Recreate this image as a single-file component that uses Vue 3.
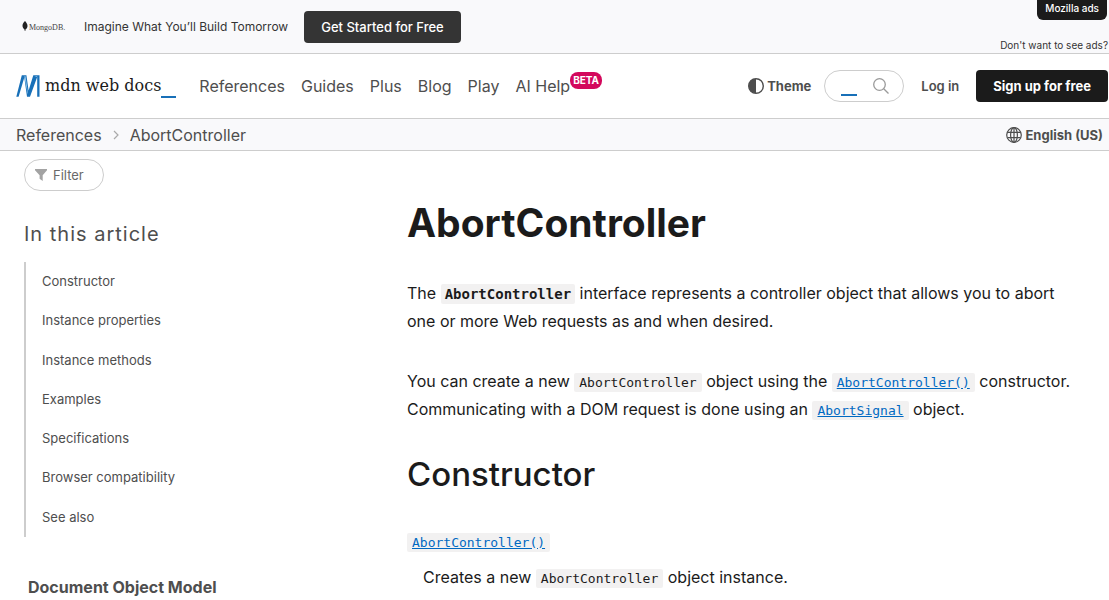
<script setup>
const navItems = ['References', 'Guides', 'Plus', 'Blog', 'Play']
const tocItems = [
  'Constructor',
  'Instance properties',
  'Instance methods',
  'Examples',
  'Specifications',
  'Browser compatibility',
  'See also',
]
</script>

<template>
  <div class="page">
    <aside class="banner" aria-label="Advertisement">
      <svg class="mongo" viewBox="0 0 42 14" role="img" aria-label="MongoDB">
        <path d="M3 1C1.200 2.800.4 4.200.5 6c.1 1.500 1 2.700 2 3.400l.3 1.600h.5l.3-1.700C4.900 8.500 5.600 7.300 5.500 5.700 5.400 3.800 4.200 2.500 3 1z" fill="#222" />
        <text x="7" y="10" class="mongo-name">MongoDB.</text>
      </svg>
      <span class="banner-text">Imagine What You’ll Build Tomorrow</span>
      <button type="button" class="banner-cta">Get Started for Free</button>
      <div class="banner-notes">
        <a href="#" class="mozilla">Mozilla ads</a>
        <a href="#" class="no-ads">Don't want to see ads?</a>
      </div>
    </aside>

    <header class="header">
      <a href="#" class="logo" aria-label="MDN Web Docs">
        <svg class="logo-mark" viewBox="0 0 24 22" aria-hidden="true">
          <path d="M5.800.3h4.600l2.200 15.200L17.300.3h6.200v21.400h-2.300V2L14 21.700h-3L8.300 2.500 2.600 21.700H.3z" fill="#1870b8" />
          <path d="M8.300 1.300h1.300l2.400 17.200h-.5zM18.500 1.300h2.700v1z" fill="#8fc3ea" />
        </svg>
        <span class="logo-name">mdn web docs</span>
        <span class="cursor"></span>
      </a>
      <nav class="nav" aria-label="Main">
        <a v-for="item in navItems" :key="item" href="#">{{ item }}</a>
        <a href="#" class="help">AI Help<sup class="beta">BETA</sup></a>
      </nav>
      <div class="actions">
        <button type="button" class="plain theme">
          <svg viewBox="0 0 16 16" aria-hidden="true">
            <circle cx="8" cy="8" r="7.300" fill="none" stroke="#4e4e4e" stroke-width="1.400" />
            <path d="M8 .7a7.300 7.300 0 0 0 0 14.600z" fill="#4e4e4e" />
          </svg>
          Theme
        </button>
        <form class="search" role="search" @submit.prevent>
          <input type="search" aria-label="Search" />
          <span class="cursor"></span>
          <button type="submit" class="plain" aria-label="Search">
            <svg viewBox="0 0 16 16" aria-hidden="true">
              <g fill="none" stroke="#9a9a9a" stroke-width="1.300">
                <circle cx="6.500" cy="6.500" r="5.800" />
                <path d="m10.700 10.700 4.800 4.800" />
              </g>
            </svg>
          </button>
        </form>
        <a href="#" class="login">Log in</a>
        <a href="#" class="signup">Sign up for free</a>
      </div>
    </header>

    <div class="crumb-bar">
      <nav class="crumbs" aria-label="Breadcrumb">
        <a href="#">References</a>
        <svg viewBox="0 0 6 10" aria-hidden="true">
          <path d="m1 1 4 4-4 4" fill="none" stroke="#aaa" stroke-width="1.200" />
        </svg>
        <a href="#">AbortController</a>
      </nav>
      <button type="button" class="plain language">
        <svg viewBox="0 0 16 16" aria-hidden="true">
          <g fill="none" stroke="#4e4e4e" stroke-width="1.200">
            <circle cx="8" cy="8" r="7.300" />
            <ellipse cx="8" cy="8" rx="3.400" ry="7.300" />
            <path d="M8 .7v14.600M1.500 5.300h13M1.500 10.700h13" />
          </g>
        </svg>
        English (US)
      </button>
    </div>

    <div class="layout">
      <aside class="sidebar">
        <button type="button" class="filter">
          <svg viewBox="0 0 12 12" aria-hidden="true">
            <path d="M0 0h12v1.300L7.700 6.200V12L4.600 9.800V6.200L0 1.300z" fill="#a3a3a3" />
          </svg>
          Filter
        </button>
        <h2 class="toc-title">In this article</h2>
        <ul class="toc">
          <li v-for="item in tocItems" :key="item"><a href="#">{{ item }}</a></li>
        </ul>
        <a href="#" class="dom">Document Object Model</a>
      </aside>
      <main class="content">
        <h1>AbortController</h1>
        <p>The <strong><code>AbortController</code></strong> interface represents a controller object that allows you to abort one or more Web requests as and when desired.</p>
        <p>You can create a new <code>AbortController</code> object using the <a href="#"><code>AbortController()</code></a> constructor. Communicating with a DOM request is done using an <a href="#"><code>AbortSignal</code></a> object.</p>
        <h2>Constructor</h2>
        <dl>
          <dt><a href="#"><code>AbortController()</code></a></dt>
          <dd>Creates a new <code>AbortController</code> object instance.</dd>
        </dl>
      </main>
    </div>
  </div>
</template>

<style>
body {
  background: #fff;
  overflow: hidden;
}
</style>

<style scoped>
.page {
  font-family: Inter, sans-serif;
  font-size: 16px;
  line-height: 24px;
  color: #1b1b1b;
}
a {
  color: inherit;
  text-decoration: none;
}
button {
  font-family: inherit;
  cursor: pointer;
}
svg {
  display: block;
  flex: none;
}
.plain {
  display: flex;
  align-items: center;
  gap: 3px;
  padding: 0;
  border: 0;
  background: none;
  color: #4e4e4e;
  font-size: 13px;
  font-weight: 700;
  line-height: 24px;
}
.plain svg {
  width: 16px;
  height: 16px;
}
.banner {
  display: flex;
  align-items: center;
  height: 53px;
  padding: 0 1px 0 22px;
  background: #f9f9fb;
  border-bottom: 1px solid #cdcdcd;
}
.mongo {
  width: 42px;
  height: 14px;
  margin-right: 20px;
  overflow: visible;
}
.mongo-name {
  font-family: "Liberation Serif", serif;
  font-size: 8px;
  fill: #444;
}
.banner-text {
  margin-right: 16px;
  font-size: 12px;
  color: #343434;
}
.banner-cta {
  height: 32px;
  padding: 0 17px;
  border: 0;
  border-radius: 4px;
  background: #343434;
  color: #fff;
  font-size: 13px;
  font-weight: 500;
}
.banner-notes {
  display: flex;
  flex-direction: column;
  align-items: flex-end;
  justify-content: space-between;
  align-self: stretch;
  margin-left: auto;
  font-size: 10px;
  line-height: 16px;
}
.mozilla {
  margin-right: 1px;
  padding: 0 8px 4px;
  border-radius: 0 0 6px 6px;
  background: #1b1b1b;
  color: #fff;
  font-weight: 500;
}
.no-ads {
  color: #343434;
}
.header {
  display: flex;
  align-items: center;
  height: 64px;
  padding: 0 1px 0 16px;
  border-bottom: 1px solid #cdcdcd;
}
.logo {
  display: flex;
  align-items: center;
}
.logo-mark {
  width: 24px;
  height: 22px;
  margin-right: 5px;
}
.logo-name {
  font-family: "DejaVu Serif", serif;
  font-size: 16px;
}
.cursor {
  width: 15px;
  height: 2px;
  background: #1870b8;
}
.logo .cursor {
  align-self: flex-end;
}
.nav {
  display: flex;
  gap: 16px;
  margin-left: 23px;
  color: #4e4e4e;
}
.help {
  display: flex;
}
.beta {
  align-self: flex-start;
  margin-top: -2px;
  padding: 0 3px;
  border-radius: 8px;
  background: #d3085c;
  color: #fff;
  font-size: 10px;
  font-weight: 700;
  line-height: 17px;
}
.actions {
  display: flex;
  align-items: center;
  margin-left: auto;
}
.search {
  display: flex;
  align-items: center;
  width: 80px;
  height: 32px;
  box-sizing: border-box;
  margin: 0 17px 0 13px;
  padding-right: 14px;
  border: 1px solid #cdcdcd;
  border-radius: 16px;
}
.search input {
  flex: 1;
  min-width: 0;
  height: 24px;
  padding: 0;
  border: 0;
  outline: 0;
  background: none;
}
.search .cursor {
  align-self: flex-end;
  width: 16px;
  margin: 0 16px 5px 0;
}
.login {
  margin-right: 17px;
  color: #4e4e4e;
  font-size: 13px;
  font-weight: 600;
}
.signup {
  padding: 4px 17px;
  border-radius: 4px;
  background: #1b1b1b;
  color: #fff;
  font-size: 13px;
  font-weight: 700;
}
.crumb-bar {
  display: flex;
  align-items: center;
  justify-content: space-between;
  height: 31px;
  padding: 0 6px 0 16px;
  background: #f9f9fb;
  border-bottom: 1px solid #cdcdcd;
}
.crumbs {
  display: flex;
  align-items: center;
  gap: 11px;
  color: #4e4e4e;
}
.crumbs svg {
  width: 6px;
  height: 10px;
}
.layout {
  display: grid;
  grid-template-columns: 359px minmax(0, 1fr);
  column-gap: 24px;
  padding: 8px 24px 0;
}
.filter {
  display: flex;
  align-items: center;
  gap: 6px;
  width: 80px;
  height: 32px;
  padding: 0 10px;
  border: 1px solid #cdcdcd;
  border-radius: 16px;
  background: #fff;
  color: #696969;
  font-size: 13px;
}
.filter svg {
  width: 12px;
  height: 12px;
}
.toc-title {
  margin: 31px 0 16px;
  color: #4e4e4e;
  font-size: 20px;
  font-weight: 400;
  letter-spacing: 1px;
}
.toc {
  display: grid;
  min-height: 275px;
  margin: 0;
  padding: 0 0 0 16px;
  border-left: 2px solid #cdcdcd;
  list-style: none;
  color: #4e4e4e;
  font-size: 13px;
  line-height: 39px;
}
.dom {
  display: block;
  margin: 38px 0 0 4px;
  color: #4e4e4e;
  font-weight: 700;
}
h1 {
  margin: 40px 0 32px;
  font-size: 39px;
  font-weight: 700;
  line-height: 48px;
}
p {
  margin: 0 0 32px;
  line-height: 28px;
}
h2 {
  margin: 0;
}
.content h2 {
  margin-bottom: 34px;
  font-size: 33px;
  font-weight: 500;
  line-height: 38px;
}
dl,
dd {
  margin: 0;
}
dt,
dd {
  line-height: 28px;
}
dd {
  margin: 8px 0 0 16px;
}
code {
  padding: 2px 5px;
  border-radius: 2px;
  background: #f2f1f1;
  font-family: "DejaVu Sans Mono", monospace;
  font-size: 13px;
  line-height: 16px;
}
strong code {
  padding: 2px 4px;
  font-size: 14px;
}
.content a {
  color: #0069c2;
  text-decoration: underline;
}
</style>
